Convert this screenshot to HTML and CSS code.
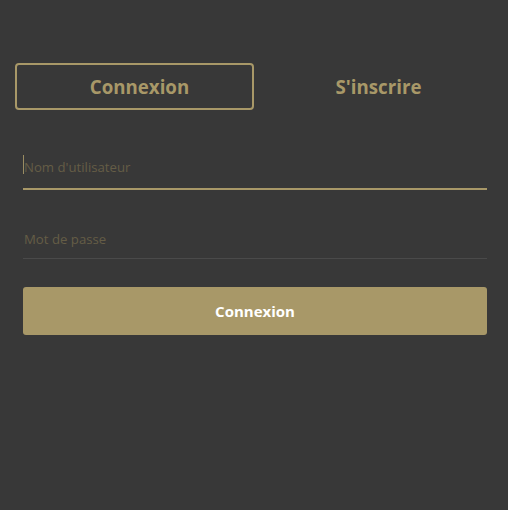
FILE: index.html
```html
<!DOCTYPE html>
<html lang="fr">
<head>
<meta charset="utf-8">
<title>Connexion</title>
<link rel="stylesheet" href="styles.css">
</head>
<body>
<div class="page">
  <div class="tabs">
    <button class="tab active">Connexion</button>
    <button class="tab">S'inscrire</button>
  </div>
  <form class="form">
    <div class="field-wrap focused">
      <input class="field" type="text" placeholder="Nom d'utilisateur">
    </div>
    <div class="field-wrap">
      <input class="field" type="password" placeholder="Mot de passe">
    </div>
    <button class="submit" type="button">Connexion</button>
  </form>
</div>
</body>
</html>
```
FILE: styles.css
```css
* { box-sizing: border-box; }
html, body {
  margin: 0;
  height: 100%;
  background: #383838;
}
body {
  font-family: "Open Sans", "Noto Sans", sans-serif;
}
.page {
  padding: 63px 15px 0 15px;
}
.tabs {
  display: flex;
}
.tab {
  flex: 1;
  height: 47px;
  background: transparent;
  border: 2px solid transparent;
  border-radius: 4px;
  color: #a89868;
  font-family: inherit;
  font-size: 18.7px;
  font-weight: 700;
  padding: 0 0 0 10px;
  cursor: pointer;
}
.tab.active {
  border-color: #a89868;
}
.form {
  display: flex;
  flex-direction: column;
  padding: 35px 6px 0 8px;
}
.field-wrap {
  position: relative;
  margin-bottom: 28px;
}
.field-wrap.focused {
  margin-bottom: 29px;
}
.field-wrap.focused::before {
  content: "";
  position: absolute;
  left: 0;
  top: 10px;
  width: 1px;
  height: 19px;
  background: #9a8c62;
}
.field {
  display: block;
  width: 100%;
  height: 40px;
  background: transparent;
  border: none;
  border-bottom: 1px solid #4a4a4a;
  padding: 0 0 0 1px;
  color: #a89868;
  caret-color: #a89868;
  font-family: inherit;
  font-size: 13.2px;
  outline: none;
}
.field::placeholder {
  color: #655d46;
}
.focused .field {
  height: 45px;
  border-bottom: 2px solid #a89868;
}
.submit {
  height: 48px;
  background: #a89868;
  border: none;
  border-radius: 3px;
  color: #ffffff;
  font-family: inherit;
  font-size: 15px;
  font-weight: 700;
  cursor: pointer;
}
```
